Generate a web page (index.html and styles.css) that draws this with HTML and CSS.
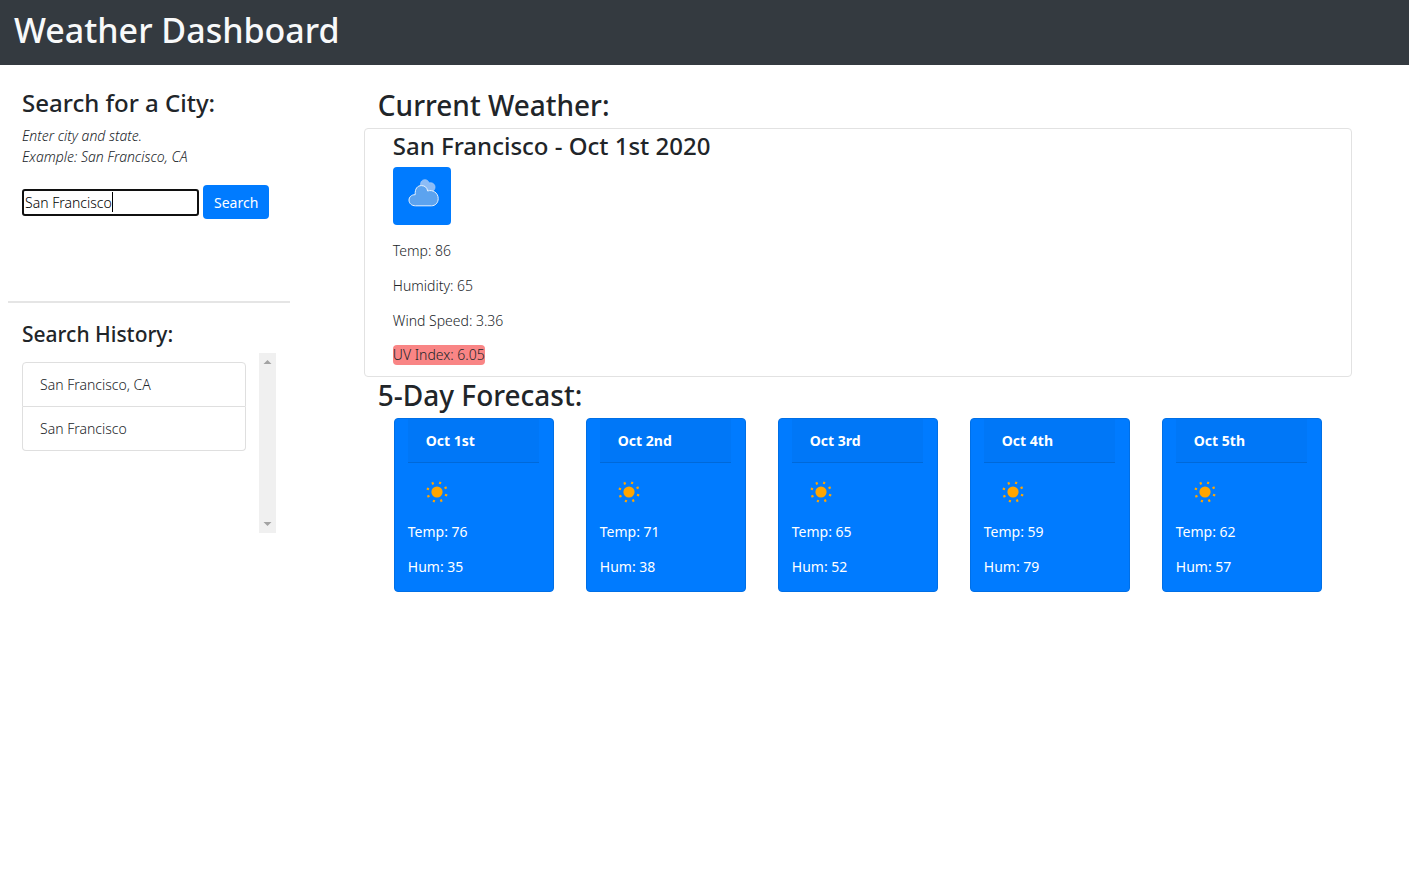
FILE: index.html
```
<!DOCTYPE html>
<html lang="en">
<head>
<meta charset="utf-8">
<title>Weather Dashboard</title>
<link rel="stylesheet" href="styles.css">
</head>
<body>
<svg class="defs" aria-hidden="true">
  <symbol id="sun" viewBox="0 0 22 22">
    <circle cx="11" cy="11" r="5.600" fill="#ffa500"/>
    <g stroke="#ffa500" stroke-width="2.100">
      <path d="M13.700 3 14.500 .8"/>
      <path d="M13.700 3 14.500 .8" transform="rotate(45 11 11)"/>
      <path d="M13.700 3 14.500 .8" transform="rotate(90 11 11)"/>
      <path d="M13.700 3 14.500 .8" transform="rotate(135 11 11)"/>
      <path d="M13.700 3 14.500 .8" transform="rotate(180 11 11)"/>
      <path d="M13.700 3 14.500 .8" transform="rotate(225 11 11)"/>
      <path d="M13.700 3 14.500 .8" transform="rotate(270 11 11)"/>
      <path d="M13.700 3 14.500 .8" transform="rotate(315 11 11)"/>
    </g>
  </symbol>
</svg>
<header class="topbar"><h1>Weather Dashboard</h1></header>
<div class="layout">
  <aside class="sidebar">
    <section class="search">
      <h2 class="search-title"><label for="city">Search for a City:</label></h2>
      <p class="hint">Enter city and state.<br>Example: San Francisco, CA</p>
      <form class="search-form">
        <span class="field"><input id="city" type="text" value="San Francisco"><span class="caret"></span></span>
        <button type="button">Search</button>
      </form>
    </section>
    <section class="history">
      <h2 class="history-title">Search History:</h2>
      <div class="history-box">
        <ul class="history-list">
          <li>San Francisco, CA</li>
          <li>San Francisco</li>
        </ul>
        <div class="scrollbar" aria-hidden="true">
          <svg width="9" height="4" viewBox="0 0 9 4"><path d="M.5 4 4.500 0 8.500 4z" fill="#a3a3a3"/></svg>
          <svg width="9" height="4" viewBox="0 0 9 4"><path d="M.5 0 4.500 4 8.500 0z" fill="#a3a3a3"/></svg>
        </div>
      </div>
    </section>
  </aside>
  <main class="main">
    <h2 class="main-title">Current Weather:</h2>
    <section class="current">
      <h3>San Francisco - Oct 1st 2020</h3>
      <div class="weather-icon">
        <svg width="32" height="32" viewBox="0 0 32 32" role="img" aria-label="Cloudy">
          <path d="M13 9C11.800 4.500 13.500 2 16.500 1.700C19 1.500 20.500 3 21 5C24 4 27 6 27 9C27 11 26 12.500 25 13L14 11Z" fill="#8cbcf6" stroke="#a9cdfa" stroke-width=".7"/>
          <path d="M7.200 16.700C6.800 10.500 9.500 7.600 13.500 7.600C17 7.600 19.200 9.700 19.600 13C24.500 11.300 30.200 14.700 30.200 20.500C30.200 25 27.200 27.800 23.500 27.800H7.500C3.500 27.800 1 25.300 1 22.100C1 19 3.500 16.600 7.200 16.700Z" fill="#5ca3ef" stroke="#e9f3fe"/>
        </svg>
      </div>
      <p>Temp: 86</p>
      <p>Humidity: 65</p>
      <p>Wind Speed: 3.36</p>
      <p><span class="uv">UV Index: 6.05</span></p>
    </section>
    <h2 class="main-title">5-Day Forecast:</h2>
    <section class="forecast">
      <article class="day"><h3>Oct 1st</h3><svg class="sun" role="img" aria-label="Sunny"><use href="#sun"/></svg><p>Temp: 76</p><p>Hum: 35</p></article>
      <article class="day"><h3>Oct 2nd</h3><svg class="sun" role="img" aria-label="Sunny"><use href="#sun"/></svg><p>Temp: 71</p><p>Hum: 38</p></article>
      <article class="day"><h3>Oct 3rd</h3><svg class="sun" role="img" aria-label="Sunny"><use href="#sun"/></svg><p>Temp: 65</p><p>Hum: 52</p></article>
      <article class="day"><h3>Oct 4th</h3><svg class="sun" role="img" aria-label="Sunny"><use href="#sun"/></svg><p>Temp: 59</p><p>Hum: 79</p></article>
      <article class="day"><h3>Oct 5th</h3><svg class="sun" role="img" aria-label="Sunny"><use href="#sun"/></svg><p>Temp: 62</p><p>Hum: 57</p></article>
    </section>
  </main>
</div>
</body>
</html>
```
FILE: styles.css
```
* { box-sizing: border-box; }
body {
  margin: 0;
  font: 300 14px/21px "Noto Sans", "Open Sans", sans-serif;
  color: #212529;
  background: #fff;
}
h1, h2, h3, p, ul { margin: 0; padding: 0; }
h1, h2, h3 { font-weight: 500; }
.defs { position: absolute; width: 0; height: 0; }
.topbar { padding: 9px 14px 14px; background: #343a40; color: #f8f9fa; }
.topbar h1 { font-size: 34px; line-height: 42px; }
.layout { display: flex; }
.sidebar { flex: 0 0 20%; margin-left: 8px; }
.search { padding: 22px 14px 82px; border-bottom: 2px solid #e5e5e5; }
.search-title { font-size: 24px; line-height: 32px; margin-bottom: 6px; }
.hint { font-style: italic; margin-bottom: 18px; }
.search-form { display: flex; align-items: center; gap: 4px; }
.field { position: relative; flex: 0 1 177px; display: flex; }
.field input {
  width: 100%;
  height: 27px;
  margin-top: 1px;
  padding: 0 1px;
  border: 2px solid #101010;
  border-radius: 3px;
  outline: 0;
  font: inherit;
  color: #000;
}
.caret { position: absolute; left: 90px; top: 4px; width: 1px; height: 20px; background: #000; }
button {
  height: 34px;
  padding: 0 11px;
  border: 0;
  border-radius: 4px;
  background: #007bff;
  color: #fff;
  font: inherit;
  font-weight: 400;
}
.history { padding: 17px 14px; }
.history-title { font-size: 21px; line-height: 28px; margin-bottom: 5px; }
.history-box { display: flex; gap: 13px; height: 180px; }
.history-list { flex: 1; list-style: none; padding-top: 9px; }
.history-list li { padding: 11px 17px; border: 1px solid #dfdfdf; }
.history-list li:first-child { border-radius: 4px 4px 0 0; }
.history-list li:last-child { border-top: 0; border-radius: 0 0 4px 4px; }
.scrollbar {
  flex: 0 0 17px;
  display: flex;
  flex-direction: column;
  justify-content: space-between;
  align-items: center;
  padding: 7px 0;
  background: #f0f0f0;
}
.main { flex: 1; margin: 22px 57px 0 74px; }
.main-title { padding: 0 14px; font-size: 28px; line-height: 36px; margin-bottom: 5px; }
.current { padding: 1px 28px 10px; border: 1px solid #e2e2e2; border-radius: 4px; }
.current h3 { font-size: 24px; line-height: 32px; margin-bottom: 5px; }
.weather-icon {
  display: flex;
  width: 58px;
  height: 58px;
  margin-bottom: 15px;
  padding: 11px 11px 15px 15px;
  border-radius: 4px;
  background: #007bff;
}
.current p + p { margin-top: 14px; }
.uv { display: block; width: fit-content; line-height: 20px; border-radius: 4px; background: #f98585; }
.current p:last-child { padding-bottom: 1px; }
.forecast { display: flex; flex-wrap: wrap; gap: 32px; padding: 0 30px; }
.day {
  flex: 0 0 160px;
  padding: 0 14px 14px 13px;
  border: 1px solid #006fe6;
  border-radius: 4px;
  background: #007bff;
  color: #fff;
  font-weight: 400;
}
.day h3 {
  padding: 11px 18px;
  border-bottom: 1px solid #0069d9;
  background: #0077f7;
  font-size: 14px;
  font-weight: 700;
}
.sun { display: block; width: 22px; height: 22px; margin: 18px; }
.day p + p { margin-top: 14px; }
```
